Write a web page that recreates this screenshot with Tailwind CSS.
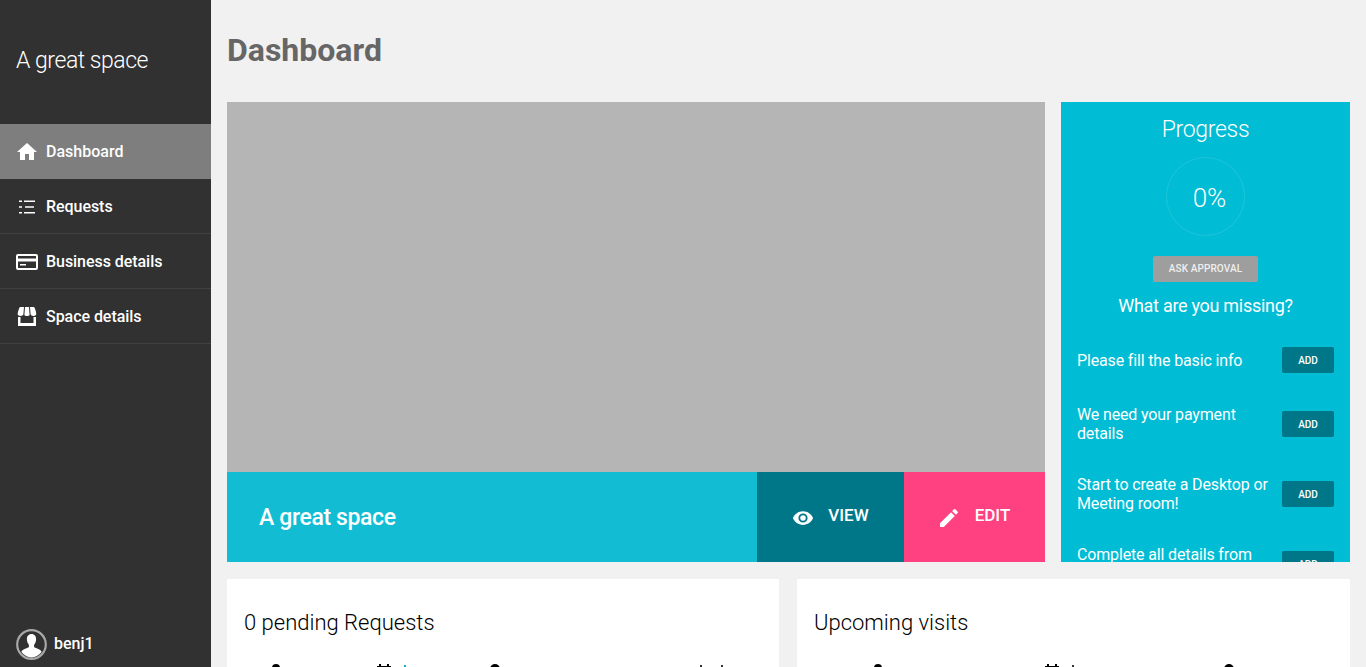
<!doctype html>
<html>
<head>
<meta charset="utf-8">
<script src="https://cdn.jsdelivr.net/npm/@tailwindcss/browser@4"></script>
</head>
<body class="h-[667px] w-[1366px] overflow-hidden bg-[#f1f1f1] font-['Roboto',sans-serif]">
<div class="flex h-[667px] overflow-hidden">
  <aside class="flex h-full w-[211px] shrink-0 flex-col justify-between bg-[#313131] text-white">
    <div>
      <div class="flex h-[124px] items-center pb-[1px] pl-[16px] text-[23px] font-light tracking-[-0.46px]">A great space</div>
      <nav class="text-[16px] font-medium">
        <a class="flex h-[55px] items-center gap-[7px] bg-[#7e7e7e] pl-[15px]">
          <svg class="h-[24px] w-[24px]" viewBox="0 0 24 24" fill="#fff"><path d="M10 20v-6h4v6h5v-8h3L12 3 2 12h3v8z"/></svg>Dashboard</a>
        <a class="flex h-[55px] items-center gap-[8px] border-b border-[#414141] pl-[16px] pt-[1px] tracking-[-0.05px]">
          <svg class="h-[22px] w-[22px]" viewBox="0 0 22 22" fill="#fff"><path d="M3 4.500h3v1.600H3zM8 4.500h11v1.600H8zM3 10.200h3v1.600H3zM9 10.200h9v1.600H9zM3 15.900h3v1.600H3zM8 15.900h11v1.600H8z"/></svg>Requests</a>
        <a class="flex h-[55px] items-center gap-[8px] border-b border-[#414141] pl-[16px] pt-[1px] tracking-[-0.05px]">
          <svg class="h-[22px] w-[22px]" viewBox="0 0 22 22"><path fill="#fff" fill-rule="evenodd" d="M2 3h18a2 2 0 0 1 2 2v12a2 2 0 0 1-2 2H2a2 2 0 0 1-2-2V5a2 2 0 0 1 2-2zm0 2v2.500h18V5zm0 5.500V17h18v-6.500z"/><path fill="#fff" d="M4 13h6v1.500H4z"/></svg>Business details</a>
        <a class="flex h-[55px] items-center gap-[8px] border-b border-[#414141] pl-[16px] pt-[1px] tracking-[-0.05px]">
          <svg class="h-[22px] w-[22px]" viewBox="0 0 22 22" fill="#fff"><path d="M4 1h4l-.6 7.200C7 10 3.500 10.500 2 9c-1-1 1-7 2-8zM9 1h4l.6 8c-.8 1.400-4.400 1.400-5.200 0zM14 1h4c1 1 3 7 2 8-1.500 1.500-5 1-5.400-.8z"/><path d="M2 11h2.500v6h13v-6H20v9H2z"/></svg>Space details</a>
      </nav>
    </div>
    <div class="flex h-[46px] items-center gap-[7px] pl-[16px] text-[16px] font-medium">
      <svg class="h-[31px] w-[31px]" viewBox="0 0 31 31">
        <circle cx="15.500" cy="15.500" r="14.300" fill="#313131" stroke="#a8a8a8" stroke-width="2.200"/>
        <path fill="#fff" d="M15.500 5c3 0 4.700 2.300 4.600 5.500-.1 2.300-1 4-2 5.200v2.300c1 1.200 6.200 1.700 7.600 4.800A14 14 0 0 1 15.500 28.500a14 14 0 0 1-10.200-5.700c1.400-3.100 6.600-3.600 7.600-4.800v-2.300c-1-1.200-1.900-2.900-2-5.200C10.800 7.300 12.500 5 15.500 5z"/>
      </svg>benj1</div>
  </aside>
  <main class="min-w-0 flex-1 pl-[16px] pr-[16px]">
    <h1 class="flex h-[102px] items-center pb-[2px] text-[32px] font-bold text-[#666]">Dashboard</h1>
    <div class="flex h-[460px] gap-[16px]">
      <section class="flex w-[818px] flex-col">
        <div class="h-[370px] bg-[#b5b5b5]"></div>
        <div class="flex h-[90px] items-center bg-[#12bdd3] text-white">
          <div class="flex-1 pl-[32px] pt-[2px] text-[23px] font-medium tracking-[-0.37px]">A great space</div>
          <a class="flex h-full w-[147px] items-center justify-center gap-[14px] bg-[#007789] text-[17px] font-medium">
            <svg class="mt-[1px] h-[22px] w-[22px]" viewBox="0 0 24 24" fill="#fff"><path d="M12 4.500C7 4.500 2.700 7.600 1 12c1.700 4.400 6 7.500 11 7.500s9.300-3.100 11-7.500c-1.700-4.400-6-7.500-11-7.500zM12 17a5 5 0 1 1 0-10 5 5 0 0 1 0 10zm0-8a3 3 0 1 0 0 6 3 3 0 0 0 0-6z"/></svg><span class="mb-[3px]">VIEW</span></a>
          <a class="flex h-full w-[141px] items-center justify-center gap-[14px] bg-[#ff4081] pr-[2px] text-[17px] font-medium">
            <svg class="mt-[1px] h-[24px] w-[24px]" viewBox="0 0 24 24" fill="#fff"><path d="M3 17.250V21h3.750L17.810 9.940l-3.750-3.750zM20.710 7.040a1 1 0 0 0 0-1.410l-2.340-2.340a1 1 0 0 0-1.410 0l-1.830 1.830 3.750 3.750z"/></svg><span class="mb-[3px]">EDIT</span></a>
        </div>
      </section>
      <section class="h-[460px] w-[289px] overflow-hidden bg-[#00bcd4] text-white">
        <div class="pt-[14px] text-center text-[23px] leading-[28px] font-light tracking-[-0.3px]">Progress</div>
        <div class="mx-auto mt-[13px] flex h-[79px] w-[79px] items-center justify-center rounded-full border border-[#1fc5da] pl-[8px] pt-[3px] text-[26px] font-light">0%</div>
        <div class="mt-[20px] flex justify-center"><span class="flex h-[26px] w-[105px] items-center justify-center rounded-[2px] bg-[#9e9e9e] pb-[1px] text-[10px] font-medium tracking-[0.1px] text-[#eee]">ASK APPROVAL</span></div>
        <div class="mt-[13px] text-center text-[18px] leading-[22px] tracking-[-0.29px]">What are you missing?</div>
        <div class="mt-[30px] flex flex-col gap-[32px] pl-[16px] pr-[16px] text-[16px] leading-[19px] tracking-[-0.15px]">
          <div class="flex items-center justify-between"><span class="w-[197px]">Please fill the basic info</span><span class="flex h-[26px] w-[52px] items-center justify-center rounded-[2px] bg-[#007789] text-[10px] font-medium tracking-normal">ADD</span></div>
          <div class="flex items-center justify-between"><span class="w-[197px]">We need your payment details</span><span class="flex h-[26px] w-[52px] items-center justify-center rounded-[2px] bg-[#007789] text-[10px] font-medium tracking-normal">ADD</span></div>
          <div class="flex items-center justify-between"><span class="w-[197px]">Start to create a Desktop or Meeting room!</span><span class="flex h-[26px] w-[52px] items-center justify-center rounded-[2px] bg-[#007789] text-[10px] font-medium tracking-normal">ADD</span></div>
          <div class="flex items-center justify-between"><span class="w-[197px]">Complete all details from your space</span><span class="flex h-[26px] w-[52px] items-center justify-center rounded-[2px] bg-[#007789] text-[10px] font-medium tracking-normal">ADD</span></div>
        </div>
      </section>
    </div>
    <div class="mt-[17px] flex gap-[18px]">
      <section class="h-[88px] w-[552px] overflow-hidden bg-white pl-[17px] pt-[30px] text-black">
        <div class="text-[22px] leading-[28px] font-light">0 pending Requests</div>
        <div class="mt-[27px] flex h-[16px] items-start">
          <svg class="ml-[24px] h-[16px] w-[16px]" viewBox="0 0 16 16" fill="#000"><circle cx="8" cy="4" r="4"/><path d="M0 16c0-4 4-6 8-6s8 2 8 6z"/></svg>
          <svg class="ml-[92px] h-[16px] w-[16px]" viewBox="0 0 16 16" fill="#000"><path d="M3 0h2v2h6V0h2v2h2v14H1V2h2z"/></svg>
          <span class="ml-[12px] mt-[1px] h-[8px] w-[2px] bg-[#00bcd4]"></span>
          <svg class="ml-[81px] h-[16px] w-[16px]" viewBox="0 0 16 16" fill="#000"><path d="M8 0a5 5 0 0 0-5 5c0 4 5 11 5 11s5-7 5-11a5 5 0 0 0-5-5z"/></svg>
          <span class="ml-[197px] mt-[1px] h-[8px] w-[2px] bg-[#333]"></span>
          <span class="ml-[19px] mt-[1px] h-[8px] w-[2px] bg-[#333]"></span>
        </div>
      </section>
      <section class="h-[88px] w-[553px] overflow-hidden bg-white pl-[17px] pt-[30px] text-black">
        <div class="text-[22px] leading-[28px] font-light">Upcoming visits</div>
        <div class="mt-[27px] flex h-[16px] items-start">
          <svg class="ml-[56px] h-[16px] w-[16px]" viewBox="0 0 16 16" fill="#000"><circle cx="8" cy="4" r="4"/><path d="M0 16c0-4 4-6 8-6s8 2 8 6z"/></svg>
          <svg class="ml-[158px] h-[16px] w-[16px]" viewBox="0 0 16 16" fill="#000"><path d="M3 0h2v2h6V0h2v2h2v14H1V2h2z"/></svg>
          <span class="ml-[12px] mt-[1px] h-[8px] w-[2px] bg-[#333]"></span>
          <svg class="ml-[147px] h-[16px] w-[16px]" viewBox="0 0 16 16" fill="#000"><path d="M8 0a5 5 0 0 0-5 5c0 4 5 11 5 11s5-7 5-11a5 5 0 0 0-5-5z"/></svg>
        </div>
      </section>
    </div>
  </main>
</div>
</body>
</html>
